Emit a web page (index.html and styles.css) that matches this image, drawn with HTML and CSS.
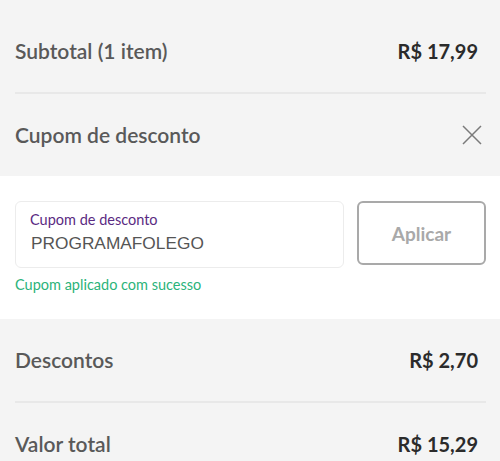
FILE: index.html
```html
<!DOCTYPE html>
<html lang="pt-BR">
	<head>
		<meta charset="UTF-8" />
		<meta name="viewport" content="width=device-width, initial-scale=1.0" />
		<title>Resumo do pedido</title>
		<link rel="stylesheet" href="styles.css">
	</head>
	<body>
		<div class="summary">
			<div class="block block-top">
				<div class="row">
					<span class="label">Subtotal (1 item)</span>
					<span class="value">R$ 17,99</span>
				</div>
				<div class="row">
					<span class="label">Cupom de desconto</span>
					<button class="close" type="button" aria-label="Fechar">
						<svg width="20" height="20" viewBox="0 0 20 20">
							<path d="M1 1 L19 19 M19 1 L1 19" stroke="#7a7a7a" stroke-width="1.5" fill="none" />
						</svg>
					</button>
				</div>
			</div>

			<form class="coupon">
				<div class="coupon-line">
					<label class="field">
						<span class="field-label">Cupom de desconto</span>
						<input type="text" value="PROGRAMAFOLEGO" />
					</label>
					<button class="apply" type="submit">Aplicar</button>
				</div>
				<p class="success">Cupom aplicado com sucesso</p>
			</form>

			<div class="block">
				<div class="row">
					<span class="label">Descontos</span>
					<span class="value">R$ 2,70</span>
				</div>
				<div class="row">
					<span class="label">Valor total</span>
					<span class="value">R$ 15,29</span>
				</div>
			</div>
		</div>
	</body>
</html>
```

FILE: styles.css
```css
* {
	box-sizing: border-box;
}
body {
	margin: 0;
	font-family: Lato, "Open Sans", sans-serif;
	color: #555;
	background-color: #f4f4f4;
}
.block {
	background-color: #f4f4f4;
	padding: 0 14px 0 15px;
}
.block-top {
	padding-top: 10px;
}
.row {
	display: flex;
	justify-content: space-between;
	align-items: center;
	padding: 28px 8px 28px 0;
	line-height: 26px;
	border-bottom: 2px solid #e8e8e8;
}
.row:last-child {
	border-bottom: none;
}
.label {
	font-size: 21px;
	font-weight: 600;
	color: #595959;
}
.value {
	font-size: 20px;
	font-weight: 700;
	color: #2b2b2b;
}
.close {
	background: none;
	border: none;
	padding: 0;
	margin-right: -4px;
	height: 26px;
	display: flex;
	align-items: center;
	cursor: pointer;
}
.coupon {
	background-color: #fff;
	padding: 25px 14px 0 15px;
	height: 143px;
	margin: 0;
}
.coupon-line {
	display: flex;
	gap: 13px;
	align-items: flex-start;
}
.field {
	flex: 1;
	height: 67px;
	border: 1px solid #ececec;
	border-radius: 6px;
	padding: 9px 14px 0 14px;
	display: flex;
	flex-direction: column;
}
.field-label {
	font-size: 14.5px;
	line-height: 18px;
	color: #5a2a82;
}
.field input {
	border: none;
	outline: none;
	padding: 0 0 0 1px;
	margin-top: 4px;
	font-family: "Liberation Sans", Arial, sans-serif;
	font-size: 17.3px;
	color: #555;
	background: none;
}
.apply {
	width: 129px;
	height: 64px;
	background-color: #fff;
	border: 2px solid #a9a9a9;
	border-radius: 6px;
	font-family: Lato, "Open Sans", sans-serif;
	font-size: 19px;
	font-weight: 700;
	color: #a9a9a9;
	cursor: pointer;
}
.success {
	margin: 8px 0 0 0;
	font-size: 14.5px;
	line-height: 18px;
	color: #2bb37a;
}
```
